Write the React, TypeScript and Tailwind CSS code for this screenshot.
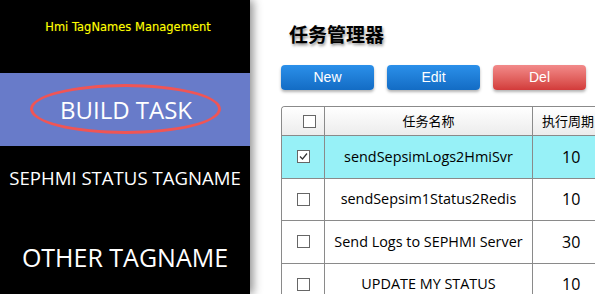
import React from "react";

const rows = [
  { name: "sendSepsimLogs2HmiSvr", period: "10", checked: true },
  { name: "sendSepsim1Status2Redis", period: "10", checked: false },
  { name: "Send Logs to SEPHMI Server", period: "30", checked: false },
  { name: "UPDATE MY STATUS", period: "10", checked: false },
];

function Box({ checked }: { checked?: boolean }) {
  return (
    <div className="w-[13px] h-[13px] border border-[#666] bg-white flex items-center justify-center">
      {checked && (
        <svg width="9" height="9" viewBox="0 0 9 9">
          <path d="M1 4.5 L3.5 7 L8 1.5" fill="none" stroke="#333" strokeWidth="1.2" />
        </svg>
      )}
    </div>
  );
}

export default function App() {
  return (
    <div className="w-[595px] h-[294px] overflow-hidden flex bg-white">
      <div className="w-[250px] shrink-0 bg-black flex flex-col relative z-10 overflow-hidden shadow-[3px_0_9px_rgba(0,0,0,0.45)]">
        <div className="h-[73px] shrink-0 pt-[19px] pl-[6px] text-center text-[11.5px] text-[#ffff00] font-['DejaVu_Sans',sans-serif] [text-shadow:0_0_1px_rgba(120,120,0,0.8)]">
          Hmi TagNames Management
        </div>
        <div className="h-[73px] shrink-0 bg-[#687bc9] relative flex items-center justify-center">
          <span className="text-white text-[24px] font-['Open_Sans',sans-serif] pl-[2px]">BUILD TASK</span>
          <div className="absolute left-[30px] top-[11px] w-[191px] h-[50px] rounded-[50%] border-[3px] border-[#f05555]"></div>
        </div>
        <div className="h-[64px] shrink-0 flex items-center justify-center text-white text-[18.6px] font-['Open_Sans',sans-serif]">
          SEPHMI STATUS TAGNAME
        </div>
        <div className="h-[96px] shrink-0 flex items-center justify-center text-white text-[25px] font-['Open_Sans',sans-serif]">
          OTHER TAGNAME
        </div>
      </div>
      <div className="flex-1 pl-[31px] bg-white">
        <div className="h-[65px] pt-[21px] pl-[8px] text-[19px] font-bold text-black font-['Noto_Sans_CJK_SC',sans-serif] [text-shadow:1px_2px_3px_rgba(0,0,0,0.45)] leading-[26px]">
          任务管理器
        </div>
        <div className="flex gap-[13px] font-['Liberation_Sans',Arial,sans-serif] text-[14px] text-white">
          <div className="w-[93px] h-[25px] rounded-[4px] bg-gradient-to-b from-[#2b90ea] to-[#136cc4] flex items-center justify-center shadow-[0_2px_3px_rgba(0,0,0,0.3)]">New</div>
          <div className="w-[93px] h-[25px] rounded-[4px] bg-gradient-to-b from-[#2b90ea] to-[#136cc4] flex items-center justify-center shadow-[0_2px_3px_rgba(0,0,0,0.3)]">Edit</div>
          <div className="w-[93px] h-[25px] rounded-[4px] bg-gradient-to-b from-[#f28a8a] to-[#d23a3a] flex items-center justify-center shadow-[0_2px_3px_rgba(0,0,0,0.3)]">Del</div>
        </div>
        <div className="mt-[16px] w-[420px] border-t border-l border-[#8a8a8a] rounded-tl-[4px] overflow-hidden">
          <div className="grid grid-cols-[43px_208px_169px] h-[29px] bg-gradient-to-b from-white to-[#ececec] border-b border-[#8a8a8a] text-[13px] text-black font-['Noto_Sans_CJK_SC',sans-serif]">
            <div className="border-r border-[#8a8a8a] flex items-center pl-[21px]"><Box /></div>
            <div className="border-r border-[#8a8a8a] flex items-center justify-center">任务名称</div>
            <div className="flex items-center pl-[9px]">执行周期</div>
          </div>
          {rows.map((r, i) => (
            <div
              key={i}
              className={
                "grid grid-cols-[43px_208px_169px] h-[42.5px] border-b border-[#8a8a8a] text-[14.4px] text-black font-['Open_Sans',sans-serif] " +
                (r.checked ? "bg-[#97f1f7]" : "bg-white")
              }
            >
              <div className="border-r border-[#8a8a8a] flex items-center pl-[15px]"><Box checked={r.checked} /></div>
              <div className="border-r border-[#8a8a8a] flex items-center justify-center whitespace-nowrap">{r.name}</div>
              <div className="flex items-center pl-[29px] text-[16px]">{r.period}</div>
            </div>
          ))}
        </div>
      </div>
    </div>
  );
}
